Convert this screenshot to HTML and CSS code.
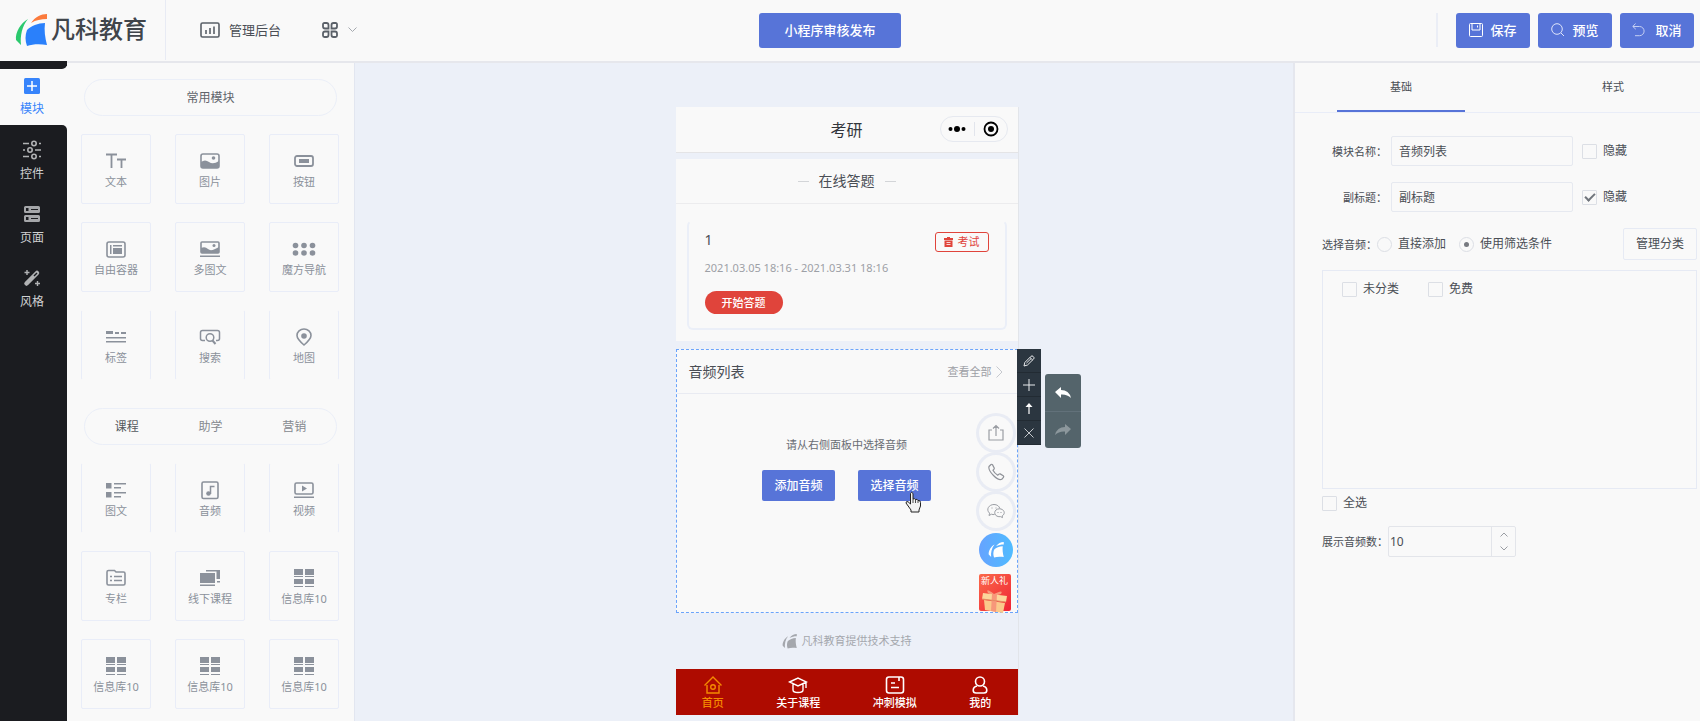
FILE: index.html
```html
<!DOCTYPE html>
<html lang="zh-CN">
<head>
  <meta charset="UTF-8">
  <meta name="viewport" content="width=device-width, initial-scale=1.0">
  <title>凡科教育</title>
  <link rel="stylesheet" href="styles.css">
</head>
<body>
  <!-- shared icons -->
  <svg class="defs" width="0" height="0">
    <symbol id="i-info" viewBox="0 0 22 20">
      <path fill="currentColor" d="M1 1h9v6H1zM12 1h9v6h-9zM1 8h9v1H1zM12 8h9v1h-9zM1 11h9v5H1zM12 11h9v5h-9zM1 18h9v1H1zM12 18h9v1h-9z"/>
    </symbol>
    <symbol id="i-sail" viewBox="0 0 32 33">
      <path class="sail-a" d="M13 5C6 9 0 18 1 26l5 5C5 22 7 12 13 5z"/>
      <path class="sail-b" d="M16 9C20 3 26 0 32 0v5c-6 0-11 1-16 4z"/>
      <path class="sail-c" d="M12 16c4-4 11-7 18-7-1 7 0 15 2 22-7-1-14-1-20 1-2-5-2-11 0-16z"/>
    </symbol>
  </svg>

  <header class="header">
    <div class="header-left">
      <a class="logo" href="#">
        <svg class="logo-icon" width="32" height="33"><use href="#i-sail"/></svg>
        <span>凡科教育</span>
      </a>
      <a class="admin" href="#">
        <svg width="20" height="16" viewBox="0 0 20 16" fill="none" stroke="#5a6068" stroke-width="1.6"><rect x="1" y="1" width="18" height="14" rx="1.5"/><path d="M6 8v4M10 6v6M14 4.500v7.500"/></svg>
        <span>管理后台</span>
      </a>
      <button class="apps" type="button" aria-label="应用">
        <svg width="16" height="16" viewBox="0 0 16 16" fill="none" stroke="#5a6068" stroke-width="1.8"><path d="M1 2.500Q1 1 2.500 1h2Q6.500 1 6.500 3v3.500H3Q1 6.500 1 4.500zM15 2.500Q15 1 13.500 1h-2Q9.500 1 9.500 3v3.500H13Q15 6.500 15 4.500zM1 13.500Q1 15 2.500 15h2Q6.500 15 6.500 13V9.500H3Q1 9.500 1 11.500zM15 13.500Q15 15 13.500 15h-2Q9.500 15 9.500 13V9.500H13Q15 9.500 15 11.500z"/></svg>
        <svg width="9" height="6" viewBox="0 0 9 6" fill="none" stroke="#a5a9af"><path d="M.5 .5l4 4 4-4"/></svg>
      </button>
    </div>
    <button class="btn btn-publish" type="button">小程序审核发布</button>
    <div class="header-right">
      <span class="divider"></span>
      <button class="btn btn-top" type="button">
        <svg width="14" height="14" viewBox="0 0 14 14" fill="none" stroke="#fff"><rect x=".5" y=".5" width="13" height="13" rx="1"/><path d="M3 .5v6.500h8V.5M8.500 2.500v2"/></svg>
        保存
      </button>
      <button class="btn btn-top" type="button">
        <svg width="14" height="14" viewBox="0 0 14 14" fill="none" stroke="#dfe5fa"><circle cx="6" cy="6" r="5.300"/><path d="M10 10l3 3"/></svg>
        预览
      </button>
      <button class="btn btn-top btn-cancel" type="button">
        <svg width="13" height="14" viewBox="0 0 13 14" fill="none" stroke="#c5cff3"><path d="M3.500 .5L.8 3.500l3 2.700M1 3.500h6.500a4.600 4.600 0 0 1 0 9.200H3"/></svg>
        取消
      </button>
    </div>
  </header>

  <div class="main">
    <nav class="side">
      <div class="side-cap"></div>
      <a class="side-item active" href="#">
        <svg width="18" height="18" viewBox="0 0 18 18"><rect x="1" y="1" width="16" height="16" rx="1.500" fill="#3784fb"/><path d="M9 4v10M4 9h10" stroke="#fff" stroke-width="1.500"/></svg>
        模块
      </a>
      <a class="side-item side-next" href="#">
        <svg width="20" height="20" viewBox="0 0 20 20" fill="none" stroke="#b1b2b4" stroke-width="1.600"><circle cx="12" cy="3.500" r="2.200"/><circle cx="8" cy="10" r="2.200"/><circle cx="12" cy="16.500" r="2.200"/><path d="M1 3.500h6M17 3.500h2M1 10h2M13 10h6M1 16.500h6M17 16.500h2"/></svg>
        控件
      </a>
      <a class="side-item" href="#">
        <svg width="18" height="18" viewBox="0 0 18 18"><path fill="#a5a6a9" fill-rule="evenodd" d="M2.500 1h13Q17 1 17 2.500v4Q17 8 15.500 8h-13Q1 8 1 6.500v-4Q1 1 2.500 1zM3 3v3h2.500V3zM8 4v1h7V4zM2.500 10h13q1.500 0 1.500 1.500v4q0 1.500-1.500 1.500h-13Q1 17 1 15.500v-4Q1 10 2.500 10zM3 12v3h2.500v-3zM8 13v1h7v-1z"/></svg>
        页面
      </a>
      <a class="side-item" href="#">
        <svg width="18" height="18" viewBox="0 0 18 18" fill="none" stroke="#b1b2b4"><path d="M3.500 14.500L14 4" stroke-width="4.500" stroke-linecap="round"/><path d="M11 7l3-3" stroke="#1b1c20" stroke-width="1.500"/><path d="M4 1v5M1.500 3.500h5M14.500 12v5M12 14.500h5" stroke-width="1.400"/></svg>
        风格
      </a>
    </nav>

    <aside class="modules">
      <h2 class="pill">常用模块</h2>
      <div class="tiles">
        <button class="tile" type="button">
          <svg width="22" height="20" viewBox="0 0 22 20" fill="none" stroke="currentColor" stroke-width="1.800"><path d="M1 3.500h11M6.500 3.500V17"/><path d="M12 8.500h9M16.500 8.500V17"/></svg>
          文本
        </button>
        <button class="tile" type="button">
          <svg width="22" height="20" viewBox="0 0 22 20"><rect x="2" y="3" width="18" height="14" rx="2" fill="none" stroke="currentColor" stroke-width="1.600"/><path d="M2 11q4-3 8 0t10-1v7H2z" fill="currentColor"/><circle cx="14.500" cy="7" r="1.800" fill="currentColor"/></svg>
          图片
        </button>
        <button class="tile" type="button">
          <svg width="22" height="20" viewBox="0 0 22 20"><rect x="2" y="5" width="18" height="10" rx="2" fill="none" stroke="currentColor" stroke-width="1.800"/><path d="M6 8h10v4H6z" fill="currentColor"/></svg>
          按钮
        </button>
        <button class="tile" type="button">
          <svg width="22" height="20" viewBox="0 0 22 20"><rect x="2" y="3" width="18" height="15" rx="2" fill="none" stroke="currentColor" stroke-width="1.600"/><path d="M5 6h1.500v9H5zM8 6h9v1.500H8zM8 9h9v6H8z" fill="currentColor"/></svg>
          自由容器
        </button>
        <button class="tile" type="button">
          <svg width="22" height="20" viewBox="0 0 22 20"><rect x="2" y="3" width="18" height="11" rx="1" fill="none" stroke="currentColor" stroke-width="1.600"/><path d="M2 9q4-2 7 1t11-2v6H2zM1 16.500h20V18H1z" fill="currentColor"/><circle cx="15" cy="6.500" r="1.500" fill="currentColor"/></svg>
          多图文
        </button>
        <button class="tile" type="button">
          <svg width="24" height="20" viewBox="0 0 24 20" fill="currentColor"><circle cx="3.500" cy="6.500" r="2.800"/><circle cx="12" cy="6.500" r="2.800"/><circle cx="20.500" cy="6.500" r="2.800"/><circle cx="3.500" cy="14" r="2.800"/><circle cx="12" cy="14" r="2.800"/><circle cx="20.500" cy="14" r="2.800"/></svg>
          魔方导航
        </button>
        <button class="tile open" type="button">
          <svg width="22" height="20" viewBox="0 0 22 20" fill="currentColor"><path d="M1 4h7v3H1zM10 5h4v2h-4zM16 5h5v2h-5zM1 10h20v1.500H1zM1 14h20v1.500H1z"/></svg>
          标签
        </button>
        <button class="tile open" type="button">
          <svg width="22" height="20" viewBox="0 0 22 20" fill="none" stroke="currentColor" stroke-width="1.500"><path d="M6 13.500H3.500Q1.500 13.500 1.500 11.500v-6Q1.500 3.500 3.500 3.500h15q2 0 2 2v6q0 2-2 2H17"/><circle cx="11" cy="10.500" r="3.800"/><path d="M13.500 13.500l3 3.500" stroke-width="2"/></svg>
          搜索
        </button>
        <button class="tile open" type="button">
          <svg width="22" height="20" viewBox="0 0 22 20"><path d="M11 18q-7-6-7-9.500a7 6.500 0 0 1 14 0Q18 12 11 18z" fill="none" stroke="currentColor" stroke-width="1.600"/><circle cx="11" cy="9" r="2.800" fill="currentColor"/></svg>
          地图
        </button>
      </div>
      <div class="pill tabs">
        <button class="on" type="button">课程</button>
        <button type="button">助学</button>
        <button type="button">营销</button>
      </div>
      <div class="tiles">
        <button class="tile open" type="button">
          <svg width="22" height="20" viewBox="0 0 22 20" fill="currentColor"><path d="M1 3h5.500v5.500H1zM1 12h5.500v5.500H1zM9 3h12v1.500H9zM9 7h7v1.500H9zM9 12h12v1.500H9zM9 16h7v1.500H9z"/></svg>
          图文
        </button>
        <button class="tile open" type="button">
          <svg width="22" height="20" viewBox="0 0 22 20"><rect x="3" y="2" width="16" height="16.500" rx="1.500" fill="none" stroke="currentColor" stroke-width="1.600"/><path d="M11.500 14V6.500h4" fill="none" stroke="currentColor" stroke-width="1.500"/><circle cx="9.500" cy="13.500" r="2.300" fill="currentColor"/></svg>
          音频
        </button>
        <button class="tile open" type="button">
          <svg width="22" height="20" viewBox="0 0 22 20"><rect x="2" y="3" width="18" height="11" rx="1.500" fill="none" stroke="currentColor" stroke-width="1.600"/><path d="M9 5.500l5 3-5 3zM1 16.500h20V18H1z" fill="currentColor"/></svg>
          视频
        </button>
        <button class="tile" type="button">
          <svg width="22" height="20" viewBox="0 0 22 20" fill="none" stroke="currentColor" stroke-width="1.600"><path d="M2 4q0-1.500 1.500-1.500h6L11 4h7.500Q20 4 20 5.500v10q0 1.500-1.500 1.500h-15Q2 17 2 15.500z"/><path d="M5 8.500h2M9 8.500h8M5 12.500h2M9 12.500h8"/></svg>
          专栏
        </button>
        <button class="tile" type="button">
          <svg width="22" height="20" viewBox="0 0 22 20" fill="currentColor"><path d="M1 5h15v10H1zM7 2h14v9h-3.500V3.500H7zM1 16.500h15V18H1zM18 13h3v1.500h-3z"/></svg>
          线下课程
        </button>
        <button class="tile" type="button"><svg width="22" height="20"><use href="#i-info"/></svg>信息库10</button>
        <button class="tile" type="button"><svg width="22" height="20"><use href="#i-info"/></svg>信息库10</button>
        <button class="tile" type="button"><svg width="22" height="20"><use href="#i-info"/></svg>信息库10</button>
        <button class="tile" type="button"><svg width="22" height="20"><use href="#i-info"/></svg>信息库10</button>
      </div>
    </aside>

    <main class="canvas">
      <div class="phone">
        <div class="phone-nav">
          考研
          <div class="capsule">
            <svg width="18" height="8" viewBox="0 0 18 8"><circle cx="2.500" cy="4" r="2"/><circle cx="9" cy="4" r="3"/><circle cx="15.500" cy="4" r="2"/></svg>
            <i></i>
            <svg width="16" height="16" viewBox="0 0 16 16"><circle cx="8" cy="8" r="6.500" fill="none" stroke="#000" stroke-width="1.800"/><circle cx="8" cy="8" r="3"/></svg>
          </div>
        </div>

        <section class="quiz">
          <h3 class="quiz-title"><i></i>在线答题<i></i></h3>
          <div class="exam">
            <div class="exam-head">
              <span>1</span>
              <span class="exam-tag">
                <svg width="9" height="10" viewBox="0 0 9 10"><path d="M0 1h3V0h3v1h3v2H0zM.5 3.500h8V10h-8z" fill="#e0443b"/><path d="M2.500 5.500h4M2.500 7.500h4" stroke="#fff" stroke-width=".8"/></svg>
                考试
              </span>
            </div>
            <p>2021.03.05 18:16 - 2021.03.31 18:16</p>
            <button class="exam-start" type="button">开始答题</button>
          </div>
        </section>

        <section class="audio">
          <div class="audio-head">
            <h3>音频列表</h3>
            <a href="#">查看全部<svg width="7" height="12" viewBox="0 0 7 12" fill="none" stroke="#c6c9ce"><path d="M.5 .5l5.500 5.500-5.500 5.500"/></svg></a>
          </div>
          <div class="audio-body">
            <p>请从右侧面板中选择音频</p>
            <div class="audio-btns">
              <button class="btn" type="button">添加音频</button>
              <button class="btn" type="button">选择音频</button>
            </div>
          </div>

          <div class="floats">
            <a class="float" href="#" aria-label="分享"><svg width="18" height="18" viewBox="0 0 18 18" fill="none" stroke="#9a9da3" stroke-width="1.200"><path d="M5 6H2v10h14V6h-3M9 12V2M6 4.500L9 1.500l3 3"/></svg></a>
            <a class="float" href="#" aria-label="电话"><svg width="18" height="18" viewBox="0 0 18 18" fill="none" stroke="#8f9298" stroke-width="1.200"><path d="M2 3.500L4 1.500q1-.6 1.600.4L7.200 5q.4 1-1.200 2.200 1.500 3 4.800 5 1.200-1.700 2.400-1.300l3 1.800q.9.700.2 1.600l-1.600 2Q12 18 6.500 12.500T2 3.500z"/></svg></a>
            <a class="float" href="#" aria-label="微信"><svg width="18" height="16" viewBox="0 0 18 16" fill="none" stroke="#9a9da3"><path d="M7.500 11.500q-1.500.3-3-.3L2 12.500l.6-2.300C-1.500 6.500 2 1.500 7 1.500c3 0 5.300 1.700 5.800 4"/><path d="M12.500 5.800c-6 0-6.500 7.200-.6 7.900l1.600-.1 2 1-.3-1.700c4-2.500 1.600-7.100-2.700-7.100z"/><path d="M5 4.500v1M9 4.500v1M11 9v1M14 9v1"/></svg></a>
            <a class="float float-blue" href="#" aria-label="客服"><svg class="mono" width="16" height="16"><use href="#i-sail"/></svg></a>
            <a class="gift" href="#">
              新人礼
              <svg width="28" height="26" viewBox="0 0 28 26"><path d="M13 6Q4-1 7 5l6 3 7-2q3-5-7 0" fill="#f79a7c"/><path d="M2 5l24 3-1 6L1 11z" fill="#fcd59b"/><path d="M3 12l21 3-2 10-18-3z" fill="#fbc98b"/><path d="M11 6h5l-1 18-5-1z" fill="#f7977a"/><path d="M1 11l24 3" stroke="#e58c62"/></svg>
            </a>
          </div>

          <div class="tools">
            <button type="button" aria-label="编辑"><svg width="12" height="12" viewBox="0 0 12 12" fill="none" stroke="#e8eaec"><path d="M1 11l.8-3.500L8 1.300q1-.8 2 0l.8.9q.7.900-.1 1.700L4.500 10zM7 2.500L9.700 5M3.500 8L8 3.700"/></svg></button>
            <button type="button" aria-label="添加"><svg width="12" height="12" viewBox="0 0 12 12" stroke="#e8eaec"><path d="M6 0v12M0 6h12"/></svg></button>
            <button type="button" aria-label="上移"><svg width="8" height="11" viewBox="0 0 8 11"><path d="M4 0l3.500 4h-7z" fill="#fff"/><path d="M4 3v8" stroke="#fff" stroke-width="1.200"/></svg></button>
            <button type="button" aria-label="删除"><svg width="10" height="10" viewBox="0 0 10 10" stroke="#c4c8cc"><path d="M.5 .5l9 9M9.500 .5l-9 9"/></svg></button>
          </div>

          <div class="history">
            <button type="button" aria-label="撤销"><svg width="16" height="12" viewBox="0 0 16 12"><path d="M0 5l6-5v3q8 0 10 8-4-4-10-3.500V11z" fill="#fff"/></svg></button>
            <button type="button" aria-label="重做"><svg width="16" height="12" viewBox="0 0 16 12"><path d="M16 5l-6-5v3Q2 3 0 11q4-4 10-3.500V11z" fill="#8c979c"/></svg></button>
          </div>

          <svg class="hand" width="17" height="22" viewBox="0 0 17 22"><path d="M5.500 13V2.500Q6.500 0 8 2.500V8q1.500-1 2.500.5 2-.8 2.500 1 2.500-.5 2.500 2V15l-1.500 4v2H6v-2L1 12q0-2 2-1.300z" fill="#f2f2f2" stroke="#222"/><path d="M8 8v4M10.500 8.500V12M13 9.500V12" stroke="#222" stroke-width=".8"/></svg>
        </section>

        <div class="support"><svg class="mono" width="15" height="15"><use href="#i-sail"/></svg>凡科教育提供技术支持</div>

        <nav class="tabbar">
          <a class="on" href="#"><svg width="20" height="20" viewBox="0 0 20 20" fill="none" stroke="currentColor" stroke-width="1.400"><path d="M1.500 10.500L10 2l8.500 8.500M4 10v8h12v-8"/><circle cx="10" cy="12" r="2.300"/></svg>首页</a>
          <a href="#"><svg width="20" height="20" viewBox="0 0 20 20" fill="none" stroke="currentColor" stroke-width="1.400"><path d="M1.500 7L10 3l8.500 4L10 11zM5 9v6q0 2.500 5 2.500t5-2.500V9M18 7.500V13"/></svg>关于课程</a>
          <a href="#"><svg width="20" height="20" viewBox="0 0 20 20" fill="none" stroke="currentColor" stroke-width="1.600"><rect x="1.500" y="2" width="17" height="16" rx="2.500"/><path d="M14 2v4M6 8h4M6 12.500h8"/></svg>冲刺模拟</a>
          <a href="#"><svg width="20" height="20" viewBox="0 0 20 20" fill="none" stroke="currentColor" stroke-width="1.600"><circle cx="10" cy="6.500" r="4.500"/><path d="M7 11q-3.800 1-3.800 4.200Q3.200 18 6 18h8q2.800 0 2.800-2.800Q16.800 12 13 11"/></svg>我的</a>
        </nav>
      </div>
    </main>

    <aside class="props">
      <div class="props-tabs">
        <button class="on" type="button">基础</button>
        <button type="button">样式</button>
      </div>
      <form class="form">
        <div class="row">
          <label class="name" for="modName">模块名称<span class="colon">：</span></label>
          <input class="text" type="text" id="modName" value="音频列表">
          <label class="check"><input type="checkbox">隐藏</label>
        </div>
        <div class="row">
          <label class="name" for="subTitle">副标题<span class="colon">：</span></label>
          <input class="text" type="text" id="subTitle" value="副标题">
          <label class="check"><input type="checkbox" checked>隐藏</label>
        </div>
        <div class="row source">
          <span class="label">选择音频<span class="colon">：</span></span>
          <label class="check"><input type="radio" name="source">直接添加</label>
          <label class="check"><input type="radio" name="source" checked>使用筛选条件</label>
          <button class="manage" type="button">管理分类</button>
        </div>
        <div class="cats">
          <label class="check"><input type="checkbox">未分类</label>
          <label class="check"><input type="checkbox">免费</label>
        </div>
        <label class="check all"><input type="checkbox">全选</label>
        <div class="count">
          <label class="label" for="num">展示音频数<span class="colon">：</span></label>
          <div class="stepper">
            <input type="number" id="num" value="10">
            <div class="steps">
              <button type="button" aria-label="增加"><svg width="8" height="5" viewBox="0 0 8 5" fill="none" stroke="#9a9da3"><path d="M.5 4.500L4 1l3.500 3.500"/></svg></button>
              <button type="button" aria-label="减少"><svg width="8" height="5" viewBox="0 0 8 5" fill="none" stroke="#9a9da3"><path d="M.5 .5L4 4 7.500 .5"/></svg></button>
            </div>
          </div>
        </div>
      </form>
    </aside>
  </div>
</body>
</html>
```
FILE: styles.css
```css
* {
  box-sizing: border-box;
}
body {
  margin: 0;
  min-height: 100vh;
  display: flex;
  flex-direction: column;
  font-family: "Noto Sans", "Noto Sans CJK SC", sans-serif;
  font-size: 12px;
  line-height: 16px;
  color: #4a4e55;
  background: #f9f9f9;
}
a {
  color: inherit;
  text-decoration: none;
}
button, input {
  font: inherit;
  color: inherit;
}
button {
  padding: 0;
  border: none;
  background: none;
  cursor: pointer;
}
h2, h3, p {
  margin: 0;
  font-weight: normal;
}
svg {
  display: block;
  flex: none;
}
.defs {
  position: absolute;
}
/* sail logo, one colour when .mono is set */
.sail-a { fill: var(--sail, #2bc96d); }
.sail-b { fill: var(--sail, #fb7a3c); }
.sail-c { fill: var(--sail, #2a80fb); }
.mono { --sail: currentColor; }

/* header */
.header {
  display: grid;
  grid-template-columns: 1fr auto 1fr;
  align-items: center;
  height: 61px;
  padding-bottom: 1px;
  position: relative;
  box-shadow: 0 0 0 2px #e6e7ec;
}
.header-left, .header-right {
  display: flex;
  align-items: center;
}
.logo {
  display: flex;
  align-items: center;
  gap: 4px;
  width: 166px;
  height: 60px;
  padding-left: 15px;
  border-right: 1px solid #e8ebf4;
  font-size: 24px;
  line-height: 32px;
  font-weight: 500;
  color: #40454b;
}
.logo span {
  padding-bottom: 2px;
}
.admin {
  display: flex;
  align-items: center;
  gap: 9px;
  margin-left: 34px;
  font-size: 13px;
}
.apps {
  display: flex;
  align-items: center;
  gap: 10px;
  margin-left: 41px;
}
.btn {
  display: flex;
  align-items: center;
  justify-content: center;
  color: #fff;
  background: #5774d8;
  border-radius: 3px;
  font-weight: 500;
}
.btn-publish {
  width: 142px;
  height: 35px;
  margin-right: 40px;
  font-size: 13px;
}
.header-right {
  justify-content: flex-end;
  gap: 8px;
  padding-right: 6px;
}
.divider {
  width: 2px;
  height: 34px;
  margin-right: 10px;
  background: #ebeef6;
}
.btn-top {
  gap: 7px;
  width: 74px;
  height: 35px;
  font-size: 13px;
}
.btn-cancel {
  gap: 10px;
}

.main {
  flex: 1;
  display: flex;
}

/* left black bar */
.side {
  width: 67px;
  background: #1b1c20;
}
.side-cap {
  height: 8px;
  background: #1b1c20;
  border-bottom-right-radius: 5px;
  box-shadow: 0 5px 0 #f9f9f9;
  position: relative;
}
.side-item {
  display: flex;
  flex-direction: column;
  align-items: center;
  gap: 6px;
  height: 64px;
  padding: 15px 3px 0 0;
  color: #d0d1d2;
}
.side-item svg {
  height: 20px;
}
.side-item.active {
  height: 56px;
  gap: 5px;
  padding-top: 7px;
  color: #3784fb;
  background: #f9f9f9;
}
.side-next {
  border-top-right-radius: 5px;
  background: #1b1c20;
  box-shadow: 0 -5px 0 #f9f9f9;
}
.side-item.active svg {
  position: relative;
}

/* module list */
.modules {
  width: 288px;
  padding: 18px 14px 12px;
  border-right: 1px solid #e2e6f0;
}
.pill {
  height: 37px;
  margin: 0 3px 18px;
  border: 1px solid #ebeff8;
  border-radius: 19px;
  font-size: 12px;
  line-height: 36px;
  text-align: center;
  color: #60646b;
}
.tabs {
  display: flex;
  margin-top: 28px;
  color: #85898f;
}
.tabs button {
  flex: 1;
}
.tabs .on {
  color: #55595f;
}
.tiles {
  display: grid;
  grid-template-columns: repeat(3, 70px);
  gap: 18px 24px;
}
.tile {
  display: flex;
  flex-direction: column;
  align-items: center;
  gap: 3px;
  height: 70px;
  padding-top: 16px;
  border: 1px solid #e9edf8;
  border-radius: 2px;
  font-size: 11px;
  color: #8b919b;
}
.tile.open {
  border-top-color: transparent;
  border-bottom-color: transparent;
}

/* canvas */
.canvas {
  flex: 1;
  display: flex;
  justify-content: center;
  padding: 46px 0 6px 46px;
  background: #ecf0f8;
}
.phone {
  width: 343px;
  border-right: 1px solid #e2e5ea;
}
.phone-nav {
  position: relative;
  height: 46px;
  border-bottom: 1px solid #e4e4e6;
  background: #f9f9f9;
  font-size: 16px;
  line-height: 46px;
  text-align: center;
  color: #33363b;
}
.capsule {
  position: absolute;
  top: 9px;
  right: 10px;
  display: flex;
  align-items: center;
  justify-content: space-evenly;
  width: 68px;
  height: 26px;
  border: 1px solid #e6e9f0;
  border-radius: 13px;
}
.capsule i {
  width: 1px;
  height: 14px;
  background: #e2e5ec;
}
.quiz {
  margin: 6px 0 8px;
  padding-bottom: 11px;
  background: #f9f9f9;
}
.quiz-title {
  display: flex;
  align-items: center;
  justify-content: center;
  gap: 10px;
  height: 45px;
  border-bottom: 1px solid #ececee;
  font-size: 14px;
}
.quiz-title i {
  width: 11px;
  height: 1px;
  background: #d3d5d8;
}
.exam {
  margin: 16px 11px 0;
  padding: 10px 16px 14px;
  border: 2px solid #ebeff8;
  border-top-color: transparent;
  border-radius: 6px;
}
.exam-head {
  display: flex;
  justify-content: space-between;
  font-size: 14px;
}
.exam-tag {
  display: flex;
  align-items: center;
  justify-content: center;
  gap: 5px;
  width: 54px;
  height: 20px;
  border: 1px solid #e0443b;
  border-radius: 3px;
  font-size: 11px;
  color: #e0443b;
}
.exam p {
  margin: 8px 0 15px;
  font-size: 11px;
  color: #9da0a6;
}
.exam-start {
  width: 78px;
  height: 23px;
  border-radius: 12px;
  background: #e0443b;
  font-size: 11px;
  font-weight: 500;
  color: #fff;
}
.audio {
  position: relative;
  height: 264px;
  border: 1px dashed #6ba4fb;
  background: #f9f9f9;
}
.audio-head {
  display: flex;
  align-items: center;
  justify-content: space-between;
  height: 44px;
  padding: 0 14px 0 12px;
  border-bottom: 1px solid #e9ebf2;
}
.audio-head h3 {
  font-size: 14px;
}
.audio-head a {
  display: flex;
  align-items: center;
  gap: 4px;
  font-size: 11px;
  color: #9da0a6;
}
.audio-body {
  padding-top: 43px;
  font-size: 11px;
  text-align: center;
  color: #696d74;
}
.audio-btns {
  display: flex;
  justify-content: center;
  gap: 23px;
  margin-top: 17px;
}
.audio-btns .btn {
  width: 73px;
  height: 31px;
  border-radius: 2px;
  font-size: 12px;
}
.floats {
  position: absolute;
  top: 66px;
  right: 4px;
  display: flex;
  flex-direction: column;
  gap: 5px;
}
.float {
  display: flex;
  align-items: center;
  justify-content: center;
  width: 34px;
  height: 34px;
  border-radius: 50%;
  background: #f9f9f9;
  box-shadow: 0 0 0 3px #e9ecf4;
}
.float-blue {
  color: #fff;
  background: linear-gradient(90deg, #66a3ff, #50bcff);
  box-shadow: none;
}
.gift {
  display: flex;
  flex-direction: column;
  align-items: center;
  width: 32px;
  height: 37px;
  margin-top: 2px;
  border-radius: 2px;
  background: linear-gradient(135deg, #fb6a4a, #ef2435);
  font-size: 9px;
  line-height: 14px;
  color: #fff;
}
.tools {
  position: absolute;
  top: -1px;
  left: 100%;
  width: 24px;
  background: #2b3640;
}
.tools button {
  display: flex;
  align-items: center;
  justify-content: center;
  width: 100%;
  height: 24px;
  border-bottom: 1px solid #222b33;
}
.history {
  position: absolute;
  top: 24px;
  left: calc(100% + 28px);
  width: 36px;
  border-radius: 3px;
  background: #54646b;
}
.history button {
  display: flex;
  align-items: center;
  justify-content: center;
  width: 100%;
  height: 37px;
}
.history button + button {
  border-top: 1px solid #62717a;
}
.hand {
  position: absolute;
  top: 141px;
  left: 228px;
}
.support {
  display: flex;
  align-items: center;
  justify-content: center;
  gap: 5px;
  height: 56px;
  font-size: 11px;
  color: #a4a7ad;
}
.tabbar {
  display: flex;
  justify-content: space-around;
  height: 46px;
  padding-top: 6px;
  background: #ae0b00;
  font-size: 11px;
  line-height: 15px;
  font-weight: 500;
  color: #fff;
}
.tabbar a {
  display: flex;
  flex-direction: column;
  align-items: center;
}
.tabbar .on {
  color: #f58a00;
}

/* right settings */
.props {
  width: 407px;
  border-left: 2px solid #e5e7ee;
  overflow: hidden;
}
.props-tabs {
  display: flex;
  height: 52px;
  border-bottom: 1px solid #e9edf8;
  font-size: 11px;
}
.props-tabs button {
  flex: 0 0 212px;
  position: relative;
}
.props-tabs .on::after {
  content: "";
  position: absolute;
  left: 20%;
  right: 20%;
  bottom: 0;
  height: 2px;
  background: #5774d8;
}
.form {
  padding: 23px 3px 0 27px;
}
.row {
  display: flex;
  align-items: center;
  height: 30px;
  margin-bottom: 16px;
}
.name {
  width: 69px;
  padding-right: 4px;
  text-align: right;
  font-size: 11px;
  white-space: nowrap;
}
.label {
  font-size: 11px;
}
/* the TC face centres the full-width colon */
.colon {
  font-family: "Noto Sans CJK TC", sans-serif;
}
.text {
  width: 182px;
  height: 30px;
  margin-right: 9px;
  padding: 0 7px;
  border: 1px solid #e6e9f0;
  border-radius: 2px;
  background: none;
}
.check {
  display: flex;
  align-items: center;
  gap: 6px;
}
.check input {
  appearance: none;
  display: flex;
  align-items: center;
  justify-content: center;
  width: 15px;
  height: 15px;
  margin: 0;
  border: 1px solid #dcdfe5;
  border-radius: 1px;
}
.check input[type="checkbox"]:checked::after {
  content: "";
  width: 8px;
  height: 4px;
  margin-top: -3px;
  border-left: 2px solid #70757c;
  border-bottom: 2px solid #70757c;
  transform: rotate(-45deg);
}
.check input[type="radio"] {
  border-radius: 50%;
}
.check input[type="radio"]:checked::after {
  content: "";
  width: 5px;
  height: 5px;
  border-radius: 50%;
  background: #777a80;
}
.source {
  height: 32px;
  margin-bottom: 10px;
}
.source .check + .check {
  margin-left: 13px;
}
.manage {
  width: 74px;
  height: 32px;
  margin-left: auto;
  border: 1px solid #e6eaf4;
  border-radius: 2px;
}
.cats {
  display: flex;
  align-items: flex-start;
  gap: 29px;
  height: 219px;
  padding: 10px 19px;
  border: 1px solid #e6eaf4;
}
.all {
  margin: 6px 0 15px;
}
.count {
  display: flex;
  align-items: center;
}
.stepper {
  display: flex;
  width: 128px;
  height: 31px;
  border: 1px solid #e3e5ea;
  border-radius: 2px;
}
.stepper input {
  flex: 1;
  min-width: 0;
  padding: 0 1px;
  border: none;
  background: none;
  appearance: textfield;
}
.stepper input::-webkit-inner-spin-button {
  appearance: none;
}
.steps {
  display: flex;
  flex-direction: column;
  width: 24px;
  border-left: 1px solid #e3e5ea;
}
.steps button {
  flex: 1;
  display: flex;
  align-items: center;
  justify-content: center;
}
```
